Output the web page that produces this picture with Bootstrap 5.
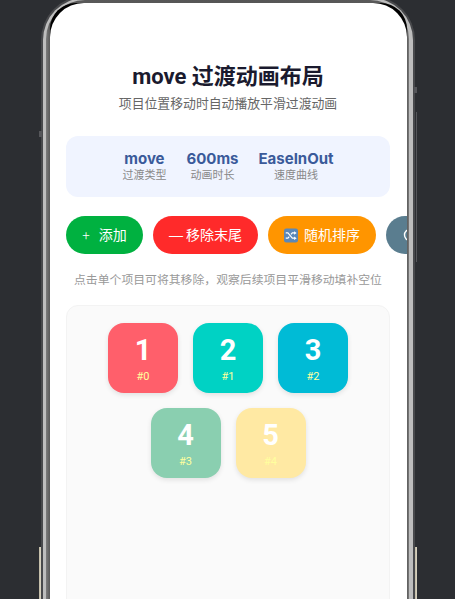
<!DOCTYPE html>
<html lang="zh">
<head>
<meta charset="utf-8">
<title>move 过渡动画布局</title>
<link href="https://cdn.jsdelivr.net/npm/bootstrap@5.3.0/dist/css/bootstrap.min.css" rel="stylesheet">
<style>
html,body{height:100%;overflow:hidden;background:#2c2e32}
body{font-family:Inter,"Noto Sans CJK SC",sans-serif}
.stage{width:455px;height:599px;overflow:hidden;padding-left:41px;position:relative}
.ring1{width:374px;height:720px;margin-top:-4px;border-radius:44px;padding:2px;background:#48494c}
.ring2{height:100%;border-radius:42px;padding:2px 4px 2px 3px;background:#bdbdbd}
.ring3{height:100%;border-radius:39px;padding:3px 2px 0 4px;background:linear-gradient(90deg,#7c7c7c 0,#5a5a5a 4px,#555 50%,#5a5a5a calc(100% - 2px),#7c7c7c 100%)}
.ring4{height:100%;border-radius:26px;background:#000}
.screen{height:100%;background:#fff;border-radius:34px;overflow:hidden;padding:0 17px 0 16px}
.heading{font-family:Roboto,"Noto Sans CJK SC",sans-serif;font-size:22px;font-weight:700;color:#1a1a2e;line-height:30px;padding-top:59px;white-space:nowrap}
.subheading{font-size:12.85px;color:#666;line-height:18px;margin-top:3px}
.stats{height:61px;margin-top:23px;background:#f0f4ff;border-radius:12px;gap:20px}
.stat-val{font-size:15px;font-weight:700;color:#3a5a9a;line-height:18px}
.stat-lab{font-size:11px;color:#888;line-height:15px}
.actions{gap:10px;margin-top:19px;width:360px}
.act{height:38px;border-radius:19px;border:0;color:#fff;font-size:14px;line-height:38px;padding:0 16px;white-space:nowrap;flex:none;gap:3px}
.a-g{background:#00b140;width:77px;gap:9px}.a-r{background:#ff2a2a;width:105px}.a-o{background:#ff9500;width:108px;gap:6px}.a-s{background:#5a7d8f;width:90px;padding-left:17px}
.thin{font-weight:300;font-family:"Noto Sans CJK SC",sans-serif}
.dash{font-family:"Liberation Sans",sans-serif;font-weight:400}
.hint{font-size:11.85px;color:#999;line-height:16px;margin-top:18px;white-space:nowrap}
.panel{margin-top:17px;height:340px;background:#fafafa;border:1px solid #f3f3f3;border-radius:12px;padding:17px 0;gap:15px}
.tile-row{gap:15px}
.tile{width:70px;height:70px;border-radius:16px;color:#fff;box-shadow:0 2px 5px rgba(0,0,0,.1)}
.tile-n{font-family:Roboto,sans-serif;font-size:29px;font-weight:700;line-height:34px;margin-top:10px}
.tile-i{font-family:Roboto,sans-serif;font-size:11px;line-height:14px;color:#ffff9e;margin-top:3px}
.c1{background:#ff5f6b}.c2{background:#00d2c4}.c3{background:#00bbd6}.c4{background:#8acfb0}.c5{background:#ffe9a3}
.side{position:absolute;width:2px;height:52px;top:547px;background:linear-gradient(90deg,#bdb6a0,#ded9c9)}
.side-l{left:39px}.side-r{left:415px}
.nub{position:absolute;background:#55565a}
.nub-l{left:39px;top:131px;width:3px;height:6px}
.nub-r{left:414px;top:87px;width:3px;height:6px}
.rail-r{position:absolute;left:416px;top:112px;width:1px;height:150px;background:#55565a}
</style>
</head>
<body>
<div class="stage">
  <div class="ring1"><div class="ring2"><div class="ring3"><div class="ring4">
      <div class="screen">
        <div class="heading text-center">move 过渡动画布局</div>
        <div class="subheading text-center">项目位置移动时自动播放平滑过渡动画</div>
        <div class="stats d-flex justify-content-center align-items-center">
          <div class="text-center"><div class="stat-val">move</div><div class="stat-lab">过渡类型</div></div>
          <div class="text-center"><div class="stat-val">600ms</div><div class="stat-lab">动画时长</div></div>
          <div class="text-center"><div class="stat-val">EaseInOut</div><div class="stat-lab">速度曲线</div></div>
        </div>
        <div class="actions d-flex">
          <button class="act a-g d-flex align-items-center justify-content-center" type="button"><span class="thin">+</span><span>添加</span></button>
          <button class="act a-r d-flex align-items-center justify-content-center" type="button"><span class="dash">—</span><span>移除末尾</span></button>
          <button class="act a-o d-flex align-items-center justify-content-center" type="button">
            <svg width="15" height="15" viewBox="0 0 16 16" aria-hidden="true"><rect width="16" height="16" rx="2.5" fill="#5b88b8"/><path d="M2 5h2.500l5 6H12M2 11h2.500l1.500-1.800M8 6.800 9.500 5H12" fill="none" stroke="#fff" stroke-width="1.300"/><path d="M11.500 3 14.500 5l-3 2zM11.500 9l3 2-3 2z" fill="#fff"/></svg>
            <span>随机排序</span></button>
          <button class="act a-s d-flex align-items-center" type="button" aria-label="重置">
            <svg width="14" height="14" viewBox="0 0 14 14" aria-hidden="true"><circle cx="7" cy="7" r="5.500" fill="none" stroke="#fff" stroke-width="1.400"/></svg>
          </button>
        </div>
        <div class="hint text-center">点击单个项目可将其移除，观察后续项目平滑移动填补空位</div>
        <div class="panel d-flex flex-column align-items-center">
          <div class="tile-row d-flex">
            <div class="tile c1 text-center"><div class="tile-n">1</div><div class="tile-i">#0</div></div>
            <div class="tile c2 text-center"><div class="tile-n">2</div><div class="tile-i">#1</div></div>
            <div class="tile c3 text-center"><div class="tile-n">3</div><div class="tile-i">#2</div></div>
          </div>
          <div class="tile-row d-flex">
            <div class="tile c4 text-center"><div class="tile-n">4</div><div class="tile-i">#3</div></div>
            <div class="tile c5 text-center"><div class="tile-n">5</div><div class="tile-i">#4</div></div>
          </div>
        </div>
      </div>
  </div></div></div></div>
  <div class="side side-l"></div>
  <div class="side side-r"></div>
  <div class="nub nub-l"></div>
  <div class="nub nub-r"></div>
  <div class="rail-r"></div>
</div>
<script src="https://cdn.jsdelivr.net/npm/bootstrap@5.3.0/dist/js/bootstrap.bundle.min.js"></script>
</body>
</html>
